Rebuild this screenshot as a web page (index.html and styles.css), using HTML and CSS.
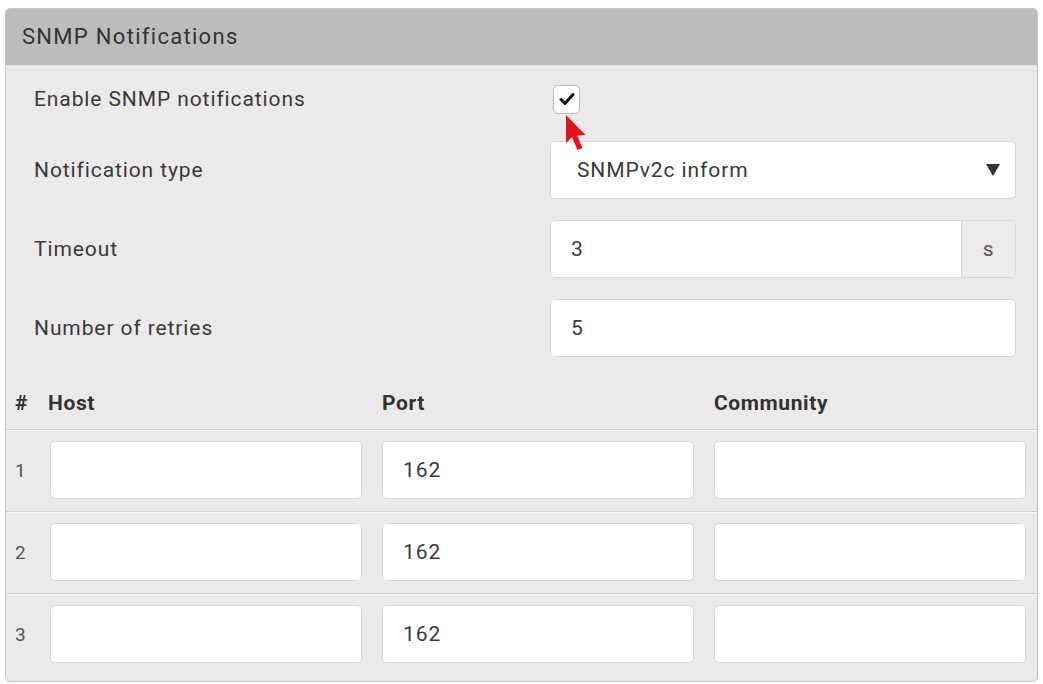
FILE: index.html
```html
<!DOCTYPE html>
<html>
<head>
<meta charset="UTF-8">
<title>SNMP Notifications</title>
<link rel="stylesheet" href="styles.css">
</head>
<body>
	<div class="panel">
		<div class="panel-head">SNMP Notifications</div>

		<div class="form">
			<label class="lbl">Enable SNMP notifications</label>
			<div class="field check-field">
				<span class="checkbox">
					<svg width="16" height="14" viewBox="0 0 16 14"><path d="M2 7.5 L6 11.5 L14 2.5" fill="none" stroke="#111" stroke-width="3" stroke-linecap="round" stroke-linejoin="round"/></svg>
				</span>
				<!-- mouse pointer hovering the checkbox -->
				<svg class="pointer" width="22" height="38" viewBox="0 0 22 38">
					<path d="M1 1 L1 29 L7 23 L12.5 36 L17.5 34 L12 21.5 L20.5 21 Z" fill="#e4121c"/>
				</svg>
			</div>

			<label class="lbl">Notification type</label>
			<div class="field">
				<div class="box select">
					<span>SNMPv2c inform</span>
					<svg class="arrow" width="14" height="12" viewBox="0 0 14 12"><path d="M0 0 H14 L7 12 Z" fill="#333"/></svg>
				</div>
			</div>

			<label class="lbl">Timeout</label>
			<div class="field">
				<div class="box group">
					<span class="group-val">3</span>
					<span class="unit">s</span>
				</div>
			</div>

			<label class="lbl">Number of retries</label>
			<div class="field">
				<div class="box"><span>5</span></div>
			</div>
		</div>

		<div class="hosts">
			<div class="hosts-row hosts-head">
				<div>#</div>
				<div class="col-host">Host</div>
				<div>Port</div>
				<div>Community</div>
			</div>
			<div class="hosts-row">
				<div class="num">1</div>
				<div class="box"></div>
				<div class="box"><span>162</span></div>
				<div class="box"></div>
			</div>
			<div class="hosts-row">
				<div class="num">2</div>
				<div class="box"></div>
				<div class="box"><span>162</span></div>
				<div class="box"></div>
			</div>
			<div class="hosts-row last">
				<div class="num">3</div>
				<div class="box"></div>
				<div class="box"><span>162</span></div>
				<div class="box"></div>
			</div>
		</div>
	</div>
</body>
</html>
```
FILE: styles.css
```css
body {
	margin: 0;
	background-color: #fff;
	font-family: Roboto, "Liberation Sans", sans-serif;
	color: #3a3a3a;
}

.panel {
	width: 1031px;
	margin: 8px 0 0 5px;
	background-color: #ebe9ea;
	border: 1px solid #c4c4c4;
	border-radius: 5px;
	overflow: hidden;
}

.panel-head {
	height: 56px;
	line-height: 56px;
	padding-left: 16px;
	background-color: #bcbcbc;
	font-size: 22px;
	letter-spacing: 1.3px;
	color: #333;
}

.form {
	display: grid;
	grid-template-columns: 516px 1fr;
	grid-template-rows: 42px 58px 58px 58px;
	row-gap: 21px;
	padding: 13px 21px 0 28px;
}

.lbl {
	display: flex;
	align-items: center;
	font-size: 21px;
	letter-spacing: 0.9px;
	color: #3a3a3a;
}

.field {
	display: flex;
	align-items: center;
}

.check-field {
	position: relative;
}

.checkbox {
	display: flex;
	align-items: center;
	justify-content: center;
	width: 25px;
	height: 27px;
	margin-left: 3px;
	background-color: #fff;
	border: 1px solid #bbb;
	border-radius: 5px;
}

.pointer {
	position: absolute;
	left: 15px;
	top: 36px;
}

.box {
	display: flex;
	align-items: center;
	height: 56px;
	width: 100%;
	background-color: #fff;
	border: 1px solid #d9d6d8;
	border-radius: 5px;
	font-size: 21px;
	letter-spacing: 0.9px;
	color: #3a3a3a;
}

.box span {
	padding-left: 20px;
}

.select {
	justify-content: space-between;
}

.select span:first-child {
	padding-left: 26px;
}

.arrow {
	margin-right: 15px;
}

.group {
	overflow: hidden;
}

.group .group-val {
	flex: 1;
}

.group .unit {
	display: flex;
	align-items: center;
	justify-content: center;
	width: 53px;
	height: 100%;
	padding: 0;
	background-color: #eeebed;
	border-left: 1px solid #d9d6d8;
	color: #555;
}

.hosts {
	margin-top: 20px;
}

.hosts-row {
	display: grid;
	grid-template-columns: 13px 1fr 1fr 1fr;
	column-gap: 22px;
	padding: 11px 13px 12px 9px;
	border-bottom: 1px solid #cfcdce;
	box-shadow: 0 1px 0 #f6f4f5;
}

.hosts-row.last {
	border-bottom: none;
	box-shadow: none;
	padding-bottom: 18px;
}

.hosts-head {
	padding-top: 0;
	padding-bottom: 0;
	height: 52px;
	align-items: center;
	font-size: 21px;
	letter-spacing: 0.6px;
	font-weight: bold;
	color: #333;
}

.col-host {
	margin-left: -2px;
}

.num {
	display: flex;
	align-items: center;
	font-size: 19px;
	color: #555;
}
```
